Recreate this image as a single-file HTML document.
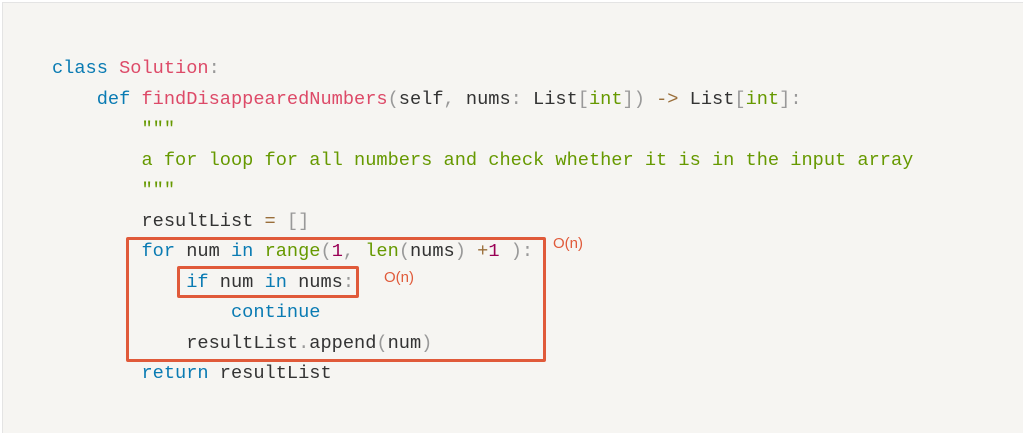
<!DOCTYPE html>
<html><head><meta charset="utf-8"><style>
body{margin:0;width:1023px;height:432px;background:#fff;overflow:hidden;position:relative}
.bg{position:absolute;left:2px;top:2px;width:1021px;height:430px;background:#f6f5f2;border-top:1px solid #e4e4e4;border-left:1px solid #e4e4e4}
pre{position:absolute;left:52px;top:53px;margin:0;font-family:"Liberation Mono",monospace;font-size:18.65px;line-height:30.5px;color:#333}
.k{color:#0a7bb3}.f{color:#dd4a68}.p{color:#999}.s{color:#690}.n{color:#905}.o{color:#9a6e3a}.b{color:#690}
.box{position:absolute;border:3px solid #e05a3a;border-radius:2px}
.lbl{position:absolute;font-family:"Liberation Sans",sans-serif;font-size:15px;color:#e05a3a}
</style></head><body><div class="bg"></div>
<pre><span class="k">class</span> <span class="f">Solution</span><span class="p">:</span>
    <span class="k">def</span> <span class="f">findDisappearedNumbers</span><span class="p">(</span>self<span class="p">,</span> nums<span class="p">:</span> List<span class="p">[</span><span class="s">int</span><span class="p">])</span> <span class="o">-&gt;</span> List<span class="p">[</span><span class="s">int</span><span class="p">]:</span>
        <span class="s">"""</span>
<span class="s">        a for loop for all numbers and check whether it is in the input array</span>
<span class="s">        """</span>
        resultList <span class="o">=</span> <span class="p">[]</span>
        <span class="k">for</span> num <span class="k">in</span> <span class="b">range</span><span class="p">(</span><span class="n">1</span><span class="p">,</span> <span class="b">len</span><span class="p">(</span>nums<span class="p">)</span> <span class="o">+</span><span class="n">1</span> <span class="p">):</span>
            <span class="k">if</span> num <span class="k">in</span> nums<span class="p">:</span>
                <span class="k">continue</span>
            resultList<span class="p">.</span>append<span class="p">(</span>num<span class="p">)</span>
        <span class="k">return</span> resultList</pre>
<div class="box" style="left:126px;top:237px;width:414px;height:119px"></div>
<div class="box" style="left:177px;top:266px;width:176px;height:26px"></div>
<div class="lbl" style="left:553px;top:235px">O(n)</div>
<div class="lbl" style="left:384px;top:269px">O(n)</div>
</body></html>
